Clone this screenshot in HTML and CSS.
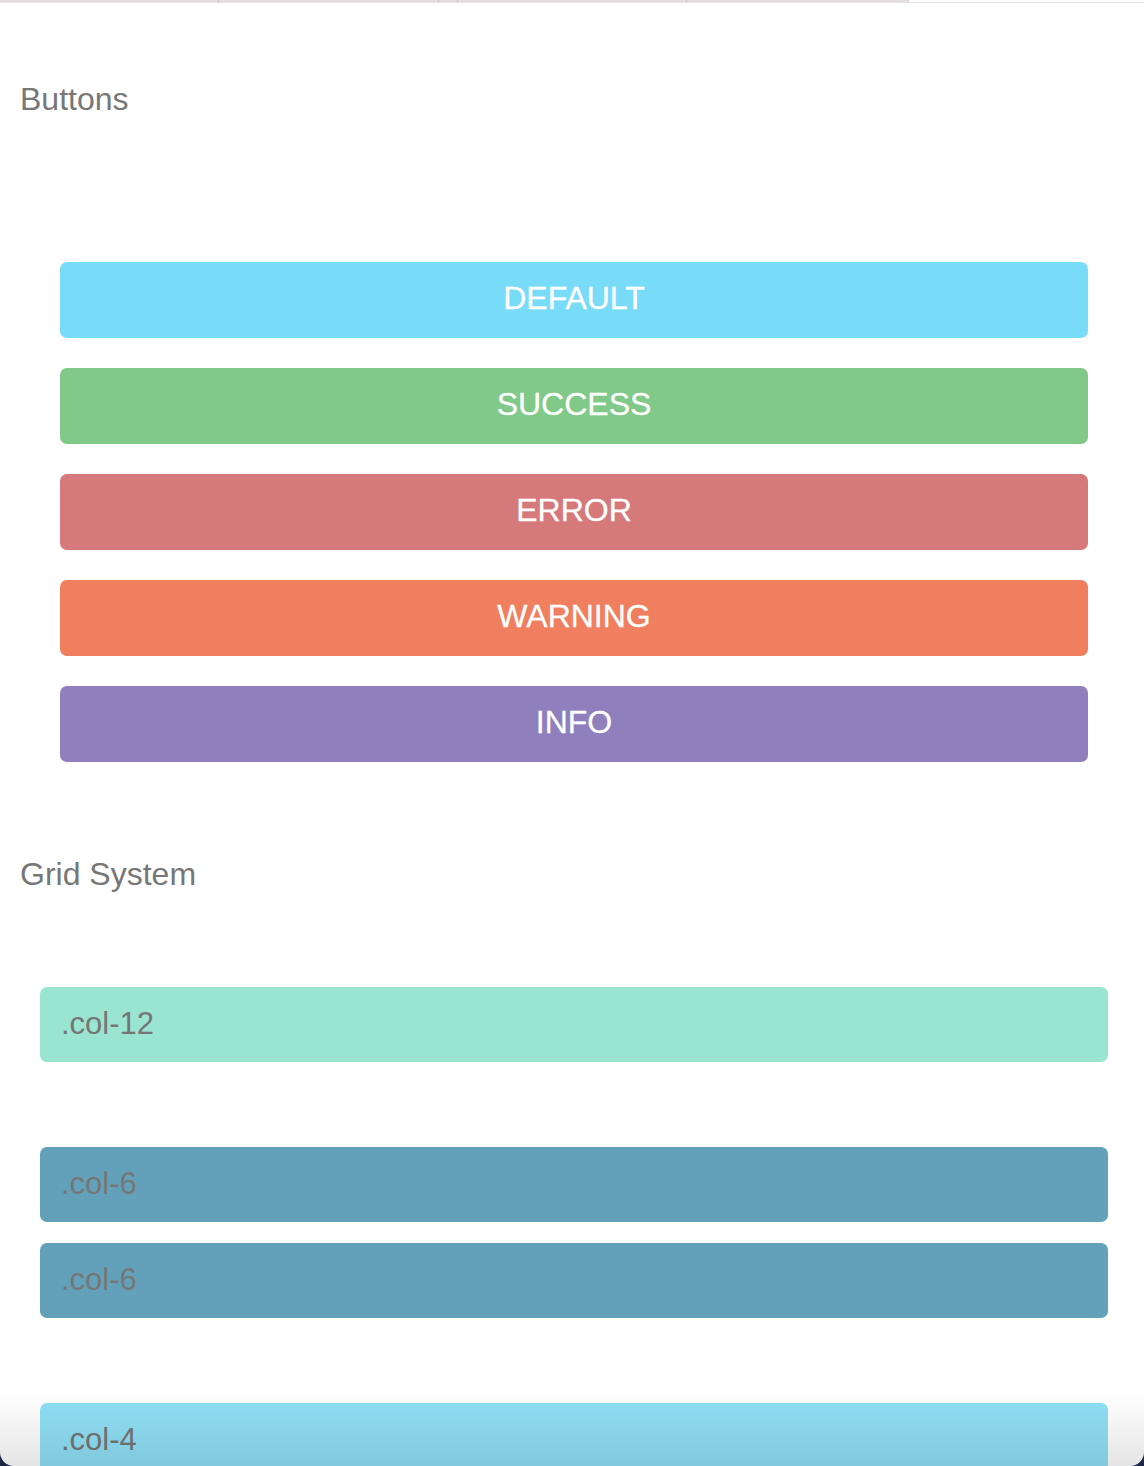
FILE: index.html
```html
<!DOCTYPE html>
<html lang="en">
<head>
<meta charset="utf-8">
<title>UI Kit</title>
<link rel="stylesheet" href="styles.css">
</head>
<body>
<div class="window">
  <div class="tabs">
    <div class="tab t1"></div>
    <div class="tab t2"></div>
    <div class="tab t3"></div>
    <div class="tab t4"></div>
    <div class="tab t5"></div>
    <div class="tab active"></div>
  </div>

  <h2 class="heading heading-buttons">Buttons</h2>
  <div class="buttons">
    <button class="btn btn-default">DEFAULT</button>
    <button class="btn btn-success">SUCCESS</button>
    <button class="btn btn-error">ERROR</button>
    <button class="btn btn-warning">WARNING</button>
    <button class="btn btn-info">INFO</button>
  </div>

  <h2 class="heading heading-grid">Grid System</h2>
  <div class="grid">
    <div class="row row-12">
      <div class="col col-12">.col-12</div>
    </div>
    <div class="row row-6">
      <div class="col col-6">.col-6</div>
      <div class="col col-6">.col-6</div>
    </div>
    <div class="row row-4">
      <div class="col col-4">.col-4</div>
    </div>
  </div>
  <div class="fade"></div>
</div>
</body>
</html>
```

FILE: styles.css
```css
html, body {
  margin: 0;
  padding: 0;
  background: #1d2745;
}

body {
  width: 1144px;
  height: 1466px;
  overflow: hidden;
  font-family: "Liberation Sans", Arial, Helvetica, sans-serif;
}

.window {
  position: relative;
  height: 1466px;
  background: #ffffff;
  border-radius: 0 0 14px 14px;
  overflow: hidden;
}

.tabs {
  display: flex;
  height: 2px;
  border-bottom: 1px solid #e8e5e5;
}

.tab {
  background: #e3dfdf;
  border-right: 1px solid #c9c5c5;
}

.t1 { width: 218px; }
.t2 { width: 219px; }
.t3 { width: 18px; }
.t4 { width: 228px; }
.t5 { width: 221px; }
.tab.active {
  flex: 1;
  background: #ffffff;
  border-right: none;
}

.heading {
  margin: 0;
  padding-left: 20px;
  font-size: 32px;
  line-height: 40px;
  font-weight: normal;
  color: #777777;
}

.heading-buttons {
  margin-top: 76px;
}

.buttons {
  display: flex;
  flex-direction: column;
  gap: 30px;
  margin: 143px 0 0 60px;
  width: 1028px;
}

.btn {
  display: block;
  width: 100%;
  height: 76px;
  border: none;
  border-radius: 7px;
  padding: 0 0 4px;
  font-family: "Liberation Sans", Arial, Helvetica, sans-serif;
  font-size: 32px;
  color: #ffffff;
  text-align: center;
  -webkit-text-stroke: 0.3px #ffffff;
}

.btn-default { background: #78dbf8; }
.btn-success { background: #80c988; }
.btn-error { background: #d5797b; }
.btn-warning { background: #f07f5f; }
.btn-info { background: #8f7fbc; }

.heading-grid {
  margin-top: 92px;
}

.grid {
  margin: 93px 36px 0 40px;
  display: flex;
  flex-direction: column;
  gap: 85px;
}

.row {
  display: flex;
  flex-direction: column;
  gap: 21px;
}

.col {
  height: 75px;
  line-height: 74px;
  padding-left: 21px;
  border-radius: 7px;
  font-size: 31px;
  color: #767676;
}

.col-12 { background: #9ae5d2; }
.col-6 { background: #62a1b9; }
.col-4 { background: #90e0f6; }

.fade {
  position: absolute;
  left: 0;
  right: 0;
  bottom: 0;
  height: 75px;
  background: linear-gradient(to bottom, rgba(0, 0, 0, 0), rgba(0, 0, 0, 0.1));
  pointer-events: none;
}
```
